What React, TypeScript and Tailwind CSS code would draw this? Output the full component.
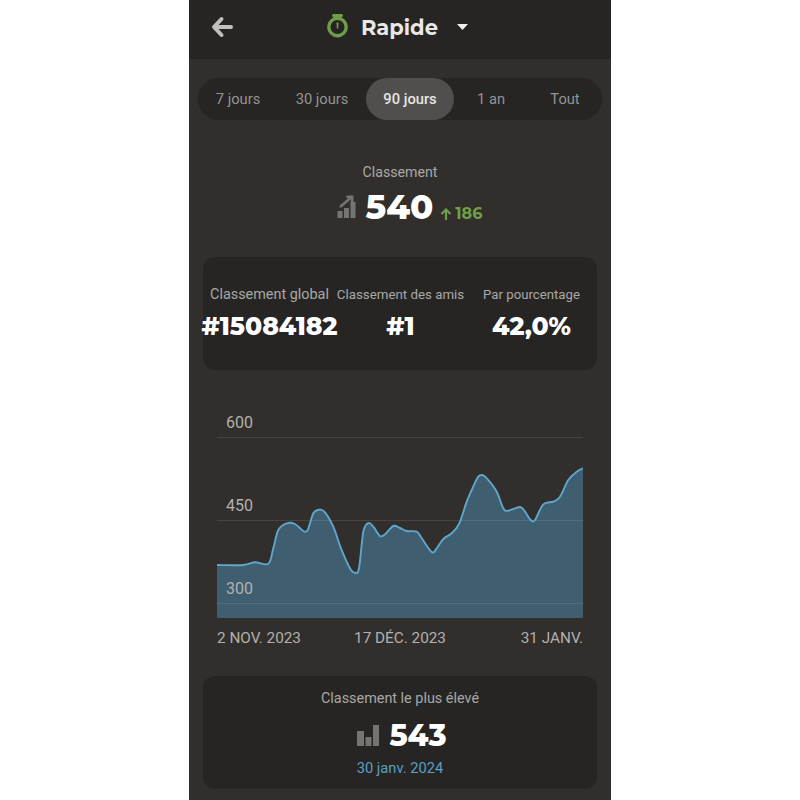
const pts: [number, number][] = [
  [217,565],[243.3,565],[255,562.3],[268.3,563.7],[273.3,548.3],[278.3,530],[286.7,523.3],[295,524],[303.3,531],[307.7,530],
  [313.3,513.3],[319.3,509.7],[325,512.3],[333.3,526.7],[341,548.3],[350,568.3],[355,572.7],[359,568.3],[363.3,531.7],[368.3,523],
  [373.3,526.7],[380,536],[385,534.3],[393.3,526],[400,528],[406.7,531],[416.7,531.7],[421.7,538.3],[431.7,552],[436.7,548.3],
  [443.3,539],[451.7,533.3],[459.3,523.3],[466.7,501.7],[471.7,490],[478.3,476.7],[483.3,475.3],[488.3,480],[496.7,491.7],[503.3,508.3],
  [508.3,510.7],[520,507],[525,511.7],[530.7,520],[535,520],[543.3,504.3],[553.3,501.7],[560,496.7],[568.3,480],[576.7,471.7],[583,468.3],
];
const X0 = 217, Y0 = 410;
const P = pts.map(([x, y]) => [x - X0, y - Y0]);
let line = `M${P[0][0]} ${P[0][1]}`;
for (let i = 0; i < P.length - 1; i++) {
  const a = P[Math.max(i - 1, 0)], b = P[i], c = P[i + 1], d = P[Math.min(i + 2, P.length - 1)];
  const f = (n: number) => n.toFixed(1);
  line += ` C${f(b[0] + (c[0] - a[0]) / 6)} ${f(b[1] + (c[1] - a[1]) / 6)} ${f(c[0] - (d[0] - b[0]) / 6)} ${f(c[1] - (d[1] - b[1]) / 6)} ${f(c[0])} ${f(c[1])}`;
}
const area = `${line} L366 208 L0 208 Z`;

const tabs = [
  { t: "7 jours", w: "w-[80px]" },
  { t: "30 jours", w: "w-[88px]" },
  { t: "90 jours", w: "w-[88px]", on: true },
  { t: "1 an", w: "w-[74px]" },
  { t: "Tout", w: "w-[74px]" },
];
const heavy = "font-['Montserrat','Inter',sans-serif] font-extrabold text-white";

function Stat({ label, value, size }: { label: string; value: string; size: string }) {
  return (
    <div className="flex w-[131px] flex-col items-center">
      <div className={`h-[20px] whitespace-nowrap leading-[20px] text-[#a9a8a6] ${size}`}>{label}</div>
      <div className={`mt-[5px] h-[32px] whitespace-nowrap text-[25px] leading-[32px] ${heavy}`}>{value}</div>
    </div>
  );
}

export default function App() {
  return (
    <div className="h-[800px] w-full overflow-hidden bg-white font-['Roboto',sans-serif]">
      <div className="mx-auto h-[800px] w-[422px] overflow-hidden bg-[#312e2b]">
        <header className="flex h-[59px] items-center bg-[#262524] pb-[5px]">
          <svg className="ml-[22px] h-[24px] w-[23px]" viewBox="0 0 23 24" fill="none" stroke="#c1c0bf" strokeWidth="4" strokeLinecap="round" strokeLinejoin="round">
            <path d="M10.5 4 L3 12 L10.5 20 M4 12 H20" />
          </svg>
          <svg className="ml-[92px] h-[26px] w-[23px]" viewBox="0 0 23 26" fill="none">
            <path d="M7.5 1.5 H15.5" stroke="#6f9e48" strokeWidth="3" strokeLinecap="round" />
            <path d="M11.5 2 V4" stroke="#6f9e48" strokeWidth="2.5" />
            <circle cx="11.5" cy="13" r="8.7" stroke="#6f9e48" strokeWidth="3.4" />
            <path d="M10.5 8.5 H12.5 L12.2 14.5 H10.8 Z" fill="#6f9e48" />
          </svg>
          <span className="ml-[12px] font-['Montserrat','Inter',sans-serif] text-[21px] font-bold leading-none text-[#e8e8e7]">Rapide</span>
          <svg className="ml-[19px] mt-[-1px] h-[6px] w-[11px]" viewBox="0 0 11 6"><path d="M0 0 H11 L5.5 6 Z" fill="#f0f0ef" /></svg>
        </header>

        <div className="mx-[9px] mt-[19px] flex h-[42px] rounded-full bg-[#262524]">
          {tabs.map((x) => (
            <div key={x.t} className={`flex h-full items-center justify-center rounded-full text-[14.7px] ${x.w} ${x.on ? "bg-[#504f4d] font-medium text-[#e6e6e5]" : "text-[#959492]"}`}>
              {x.t}
            </div>
          ))}
        </div>

        <div className="mt-[42px] text-center text-[14.2px] leading-[20px] text-[#a9a8a6]">Classement</div>
        <div className="mt-[3px] flex h-[44px] items-center justify-center pl-[19px]">
          <svg className="h-[24px] w-[20px]" viewBox="0 0 20 24" fill="none">
            <path d="M0.5 23 V16 H5.5 V23 Z M7 23 V13 H12 V23 Z M13.5 23 V7 H18.5 V23 Z" fill="#757472" />
            <path d="M3 12 L14 2.5 M9.5 1.8 H15.2 V7.5" stroke="#757472" strokeWidth="2.6" />
          </svg>
          <span className={`ml-[9px] text-[34px] leading-[44px] ${heavy}`}>540</span>
          <svg className="ml-[7px] mt-[14px] h-[12px] w-[12px]" viewBox="0 0 12 12" fill="none" stroke="#6f9e48" strokeWidth="2.2">
            <path d="M6 12 V2 M1.5 6 L6 1.5 L10.5 6" />
          </svg>
          <span className="ml-[3px] mt-[14px] font-['Montserrat','Inter',sans-serif] text-[16px] font-bold leading-none text-[#6f9e48]">186</span>
        </div>

        <section className="mx-[14px] mt-[28px] flex h-[113px] rounded-xl bg-[#262524] pl-[1px] pt-[28px]">
          <Stat label="Classement global" value="#15084182" size="text-[14.4px]" />
          <Stat label="Classement des amis" value="#1" size="text-[13.3px]" />
          <Stat label="Par pourcentage" value="42,0%" size="text-[13.2px]" />
        </section>

        <div className="relative mx-[28px] mt-[40px] h-[208px]">
          <svg className="block h-[208px] w-[366px]" viewBox="0 0 366 208" fill="none">
            <path d={area} fill="#3f5f70" />
            <path d="M0 27.5 H366 M0 110.5 H366 M0 193.5 H366" stroke="#ffffff" strokeOpacity="0.1" strokeWidth="1" />
            <path d={line} stroke="#5ea6cc" strokeWidth="1.9" />
          </svg>
          <span className="absolute left-[9px] top-[3px] text-[16px] leading-[20px] text-[#b2b1af]">600</span>
          <span className="absolute left-[9px] top-[86px] text-[16px] leading-[20px] text-[#b2b1af]">450</span>
          <span className="absolute left-[9px] top-[169px] text-[16px] leading-[20px] text-[#b2b1af]">300</span>
        </div>
        <div className="mx-[28px] mt-[10px] grid h-[20px] grid-cols-3 whitespace-nowrap text-[15.3px] leading-[20px] text-[#b2b1af]">
          <span className="text-left">2 NOV. 2023</span>
          <span className="text-center">17 DÉC. 2023</span>
          <span className="text-right">31 JANV.</span>
        </div>

        <section className="mx-[14px] mt-[28px] flex h-[113px] flex-col items-center rounded-xl bg-[#262524] pt-[13px]">
          <div className="h-[20px] text-[14.4px] leading-[20px] text-[#a9a8a6]">Classement le plus élevé</div>
          <div className="mt-[9px] flex h-[36px] items-center pl-[4px]">
            <svg className="h-[22px] w-[22px]" viewBox="0 0 22 22"><path d="M0 21 V6 H7 V21 Z M8.5 21 V12 H14.5 V21 Z M16 21 V0 H22 V21 Z" fill="#757472" /></svg>
            <span className={`ml-[10px] text-[30px] leading-[36px] ${heavy}`}>543</span>
          </div>
          <div className="mt-[4px] h-[20px] text-[14.7px] leading-[20px] text-[#5b9fc6]">30 janv. 2024</div>
        </section>
      </div>
    </div>
  );
}
